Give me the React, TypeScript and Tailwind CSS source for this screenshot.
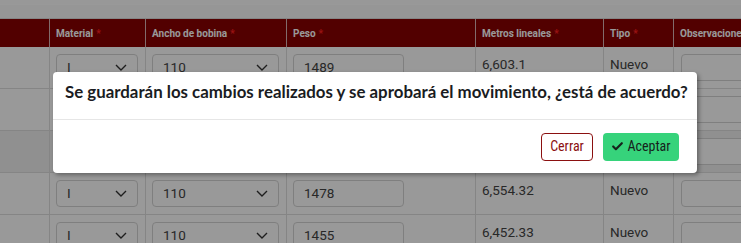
import React from "react";
import { Check } from "lucide-react";

type Row = {
  material: string;
  ancho: string;
  peso: string;
  metros: string;
  tipo: string;
  shaded?: boolean;
};

const rows: Row[] = [
  { material: "I", ancho: "110", peso: "1489", metros: "6,603.1", tipo: "Nuevo" },
  { material: "I", ancho: "110", peso: "1502", metros: "6,660.75", tipo: "Nuevo" },
  { material: "I", ancho: "110", peso: "1491", metros: "6,611.97", tipo: "Nuevo", shaded: true },
  { material: "I", ancho: "110", peso: "1478", metros: "6,554.32", tipo: "Nuevo" },
  { material: "I", ancho: "110", peso: "1455", metros: "6,452.33", tipo: "Nuevo" },
];

const cols = "grid grid-cols-[50px_96px_141px_189px_128px_70px_120px]";

function Chevron() {
  return (
    <svg width="12" height="7" viewBox="0 0 12 7" fill="none" stroke="#333" strokeWidth="1.4">
      <polyline points="1,1 6,6 11,1" />
    </svg>
  );
}

function SelectBox({ value, width }: { value: string; width: string }) {
  return (
    <div
      className={`mt-[7px] ml-[6px] flex h-[27px] items-center justify-between rounded-[4px] border border-[#d4d4d4] bg-white pl-[10px] pr-[10px] ${width}`}
    >
      <span>{value}</span>
      <Chevron />
    </div>
  );
}

function Header({ label }: { label: string }) {
  return (
    <div className="flex items-center border-r border-[#d9b3b3] pl-[6px] text-[10px] font-bold text-white">
      {label}
      <span className="ml-[3px] text-[#ff2020]">*</span>
    </div>
  );
}

export default function App() {
  return (
    <div
      className="relative h-[243px] w-[741px] overflow-hidden bg-white text-[13.5px] text-[#444]"
      style={{ fontFamily: "Roboto, 'Noto Sans', sans-serif" }}
    >
      <div className="h-[19px] border-b border-[#dcdcdc] bg-[#fbfbfb]">
        <div className="h-[5px] border-b border-white bg-[#fdfdfd]" />
      </div>

      <div className={`${cols} h-[28px] bg-[#890000]`}>
        <div className="border-r border-[#d9b3b3]" />
        <Header label="Material" />
        <Header label="Ancho de bobina" />
        <Header label="Peso" />
        <Header label="Metros lineales" />
        <Header label="Tipo" />
        <div className="flex items-center overflow-hidden whitespace-nowrap pl-[6px] text-[10px] font-bold text-white">
          Observaciones
        </div>
      </div>

      {rows.map((r, i) => (
        <div
          key={i}
          className={`${cols} h-[42px] border-b border-[#dedede] ${r.shaded ? "bg-[#f1f1f1]" : "bg-white"}`}
        >
          <div className="border-r border-[#dedede]" />
          <div className="border-r border-[#dedede]">
            <SelectBox value={r.material} width="w-[82px]" />
          </div>
          <div className="border-r border-[#dedede]">
            <SelectBox value={r.ancho} width="w-[127px]" />
          </div>
          <div className="border-r border-[#dedede]">
            <div className="mt-[7px] ml-[6px] flex h-[27px] w-[111px] items-center rounded-[4px] border border-[#d4d4d4] bg-white pl-[10px]">
              {r.peso}
            </div>
          </div>
          <div className="border-r border-[#dedede] pl-[6px] pt-[7px]">{r.metros}</div>
          <div className="border-r border-[#dedede] pl-[6px] pt-[7px]">{r.tipo}</div>
          <div>
            <div className="mt-[7px] ml-[7px] h-[27px] w-[120px] rounded-[4px] border border-[#d4d4d4] bg-white" />
          </div>
        </div>
      ))}

      {/* modal backdrop */}
      <div className="absolute inset-0 bg-black/40 pl-[53px] pt-[72px]">
        <div className="w-[644px] rounded-[4px] bg-white shadow-[2px_2px_4px_rgba(0,0,0,0.35)]">
          <div
            className="h-[48px] whitespace-nowrap border-b border-[#e6e6e6] pl-[12px] pt-[8px] text-[16.85px] font-bold leading-[24px] text-[#1a1c22]"
            style={{ fontFamily: "Lato, 'Noto Sans', sans-serif" }}
          >
            Se guardarán los cambios realizados y se aprobará el movimiento, ¿está de acuerdo?
          </div>
          <div
            className="flex h-[53px] items-center justify-end gap-[10px] pr-[18px]"
            style={{ fontFamily: "'Liberation Sans Narrow', 'Roboto Condensed', 'DejaVu Sans Condensed', sans-serif" }}
          >
            <button className="h-[28px] w-[52px] rounded-[4px] border border-[#8b1010] bg-white text-[14px] text-[#8b1010]">
              Cerrar
            </button>
            <button className="flex h-[28px] w-[76px] items-center justify-center gap-[3px] rounded-[4px] bg-[#36d37b] text-[14px] text-[#16221b]">
              <Check size={13} strokeWidth={4} />
              Aceptar
            </button>
          </div>
        </div>
      </div>
    </div>
  );
}
